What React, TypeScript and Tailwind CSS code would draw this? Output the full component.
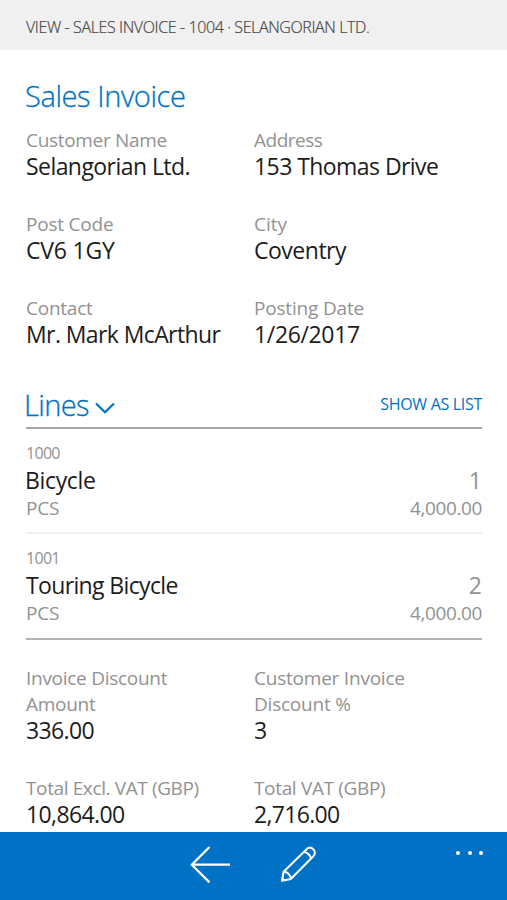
type FieldProps = { label: string[]; value: string; labelClass: string; valueClass: string };

const headerFields: FieldProps[] = [
  { label: ['Customer Name'], value: 'Selangorian Ltd.', labelClass: 'tracking-[-0.32px]', valueClass: 'tracking-[-0.56px]' },
  { label: ['Address'], value: '153 Thomas Drive', labelClass: 'tracking-[-0.5px]', valueClass: 'tracking-[-0.56px]' },
  { label: ['Post Code'], value: 'CV6 1GY', labelClass: 'tracking-[-0.21px]', valueClass: 'tracking-[-0.2px]' },
  { label: ['City'], value: 'Coventry', labelClass: 'tracking-normal', valueClass: 'tracking-[-0.49px]' },
  { label: ['Contact'], value: 'Mr. Mark McArthur', labelClass: 'tracking-[-0.25px]', valueClass: 'tracking-[-0.6px]' },
  { label: ['Posting Date'], value: '1/26/2017', labelClass: 'tracking-[-0.18px]', valueClass: 'tracking-[-0.35px]' },
];

const totalFields: FieldProps[] = [
  { label: ['Invoice Discount', 'Amount'], value: '336.00', labelClass: 'tracking-[-0.28px]', valueClass: 'tracking-[-0.63px]' },
  { label: ['Customer Invoice', 'Discount %'], value: '3', labelClass: 'tracking-[-0.22px]', valueClass: 'tracking-normal' },
  { label: ['Total Excl. VAT (GBP)'], value: '10,864.00', labelClass: 'tracking-[-0.38px]', valueClass: 'tracking-[-0.61px]' },
  { label: ['Total VAT (GBP)'], value: '2,716.00', labelClass: 'tracking-[-0.34px]', valueClass: 'tracking-[-0.68px]' },
];

function Field({ label, value, labelClass, valueClass }: FieldProps) {
  return (
    <div className="whitespace-nowrap">
      {label.map((line) => (
        <div key={line} className={`text-[19px] leading-[26px] text-[#929292] ${labelClass}`}>{line}</div>
      ))}
      <div className={`text-[23px] leading-[26px] text-[#1c1c1c] ${valueClass}`}>{value}</div>
    </div>
  );
}

type LineProps = { no: string; name: string; qty: string; noClass: string; nameClass: string; rowClass: string };

function InvoiceLine({ no, name, qty, noClass, nameClass, rowClass }: LineProps) {
  return (
    <div className={`border-b-2 pt-3 text-[#929292] ${rowClass}`}>
      <div className={`text-[16px] leading-6 ${noClass}`}>{no}</div>
      <div className="flex justify-between text-[23px] leading-[30px]">
        <span className={`text-[#1c1c1c] ${nameClass}`}>{name}</span>
        <span>{qty}</span>
      </div>
      <div className="flex justify-between text-[19px] leading-[26px]">
        <span className="tracking-[-0.2px]">PCS</span>
        <span className="tracking-[-0.39px]">4,000.00</span>
      </div>
    </div>
  );
}

export default function App() {
  return (
    <div className="flex h-[900px] w-[507px] flex-col overflow-hidden bg-white font-['Open_Sans','Noto_Sans',sans-serif]">
      <header className="flex h-[50px] shrink-0 items-center bg-[#f0f0f0] pt-[3px] pl-[26px] text-[16px] tracking-[-0.39px] whitespace-nowrap">
        <span className="font-light text-[#444] [-webkit-text-stroke:0.2px_#444]">VIEW - SALES INVOICE - 1004 · SELANGORIAN LTD.</span>
      </header>

      <main className="flex-1 pt-[26px] pr-[25px] pl-[26px]">
        <h1 className="-ml-px text-[29px] leading-10 font-light tracking-[-0.4px] text-[#0072c6] [-webkit-text-stroke:0.3px_#0072c6]">Sales Invoice</h1>
        <div className="mt-[11px] grid grid-cols-[228px_1fr] gap-y-8">
          {headerFields.map((f) => <Field key={f.value} {...f} />)}
        </div>

        <section className="mt-9">
          <div className="flex h-[46px] items-center border-b-2 border-[#a6a6a6]">
            <h2 className="-ml-[2px] text-[29px] leading-10 font-light tracking-[-0.6px] text-[#0072c6] [-webkit-text-stroke:0.3px_#0072c6]">Lines</h2>
            <svg className="mt-[5px] ml-[6.5px] h-3 w-5" viewBox="0 0 20 12" fill="none" stroke="#0072c6" strokeWidth="2.2">
              <path d="M1 1.5 L10 10.2 L19 1.5" />
            </svg>
            <span className="mb-[2px] ml-auto text-[16px] leading-6 tracking-[-0.3px] text-[#0072c6]">SHOW AS LIST</span>
          </div>
          <InvoiceLine no="1000" name="Bicycle" qty="1" noClass="tracking-[-0.7px]" nameClass="-ml-px tracking-[-0.34px]" rowClass="border-[#f0f0f0] pb-[11px]" />
          <InvoiceLine no="1001" name="Touring Bicycle" qty="2" noClass="tracking-[-0.7px]" nameClass="tracking-[-0.64px]" rowClass="border-[#b2b2b2] pb-3" />
        </section>

        <div className="mt-[25px] grid grid-cols-[228px_1fr] gap-y-8">
          {totalFields.map((f) => <Field key={f.value} {...f} />)}
        </div>
      </main>

      <footer className="flex h-[68px] shrink-0 bg-[#0072c6] pt-[14px] pl-[190px]">
        <svg className="h-10 w-10" viewBox="0 0 40 40" fill="none" stroke="#fff" strokeWidth="2.2">
          <path d="M1.5 18.7 H40 M19.5 1 L1.8 18.7 L19.5 36.4" />
        </svg>
        <svg className="ml-[50px] h-10 w-10" viewBox="0 0 40 40" fill="none" stroke="#fff" strokeWidth="2" strokeLinejoin="round">
          <path d="M2 34.8 L3.6 25.8 L26.6 3.2 C29 .9 31.5 1.5 33.3 3.3 C35.2 5.2 35.5 8 33.3 10.2 L10.8 33 Z" />
          <path d="M3.6 25.8 C7 25.5 10.8 29 10.8 33 M23.8 6 C27.2 6 31 9.6 31 13" />
          <path d="M2 34.8 L2.6 31.8 L5 34.2 Z" fill="#fff" strokeWidth="1" />
        </svg>
        <div className="mt-[5px] mr-6 ml-auto flex gap-[7.5px]">
          <span className="size-1 rounded-full bg-white" />
          <span className="size-1 rounded-full bg-white" />
          <span className="size-1 rounded-full bg-white" />
        </div>
      </footer>
    </div>
  );
}
